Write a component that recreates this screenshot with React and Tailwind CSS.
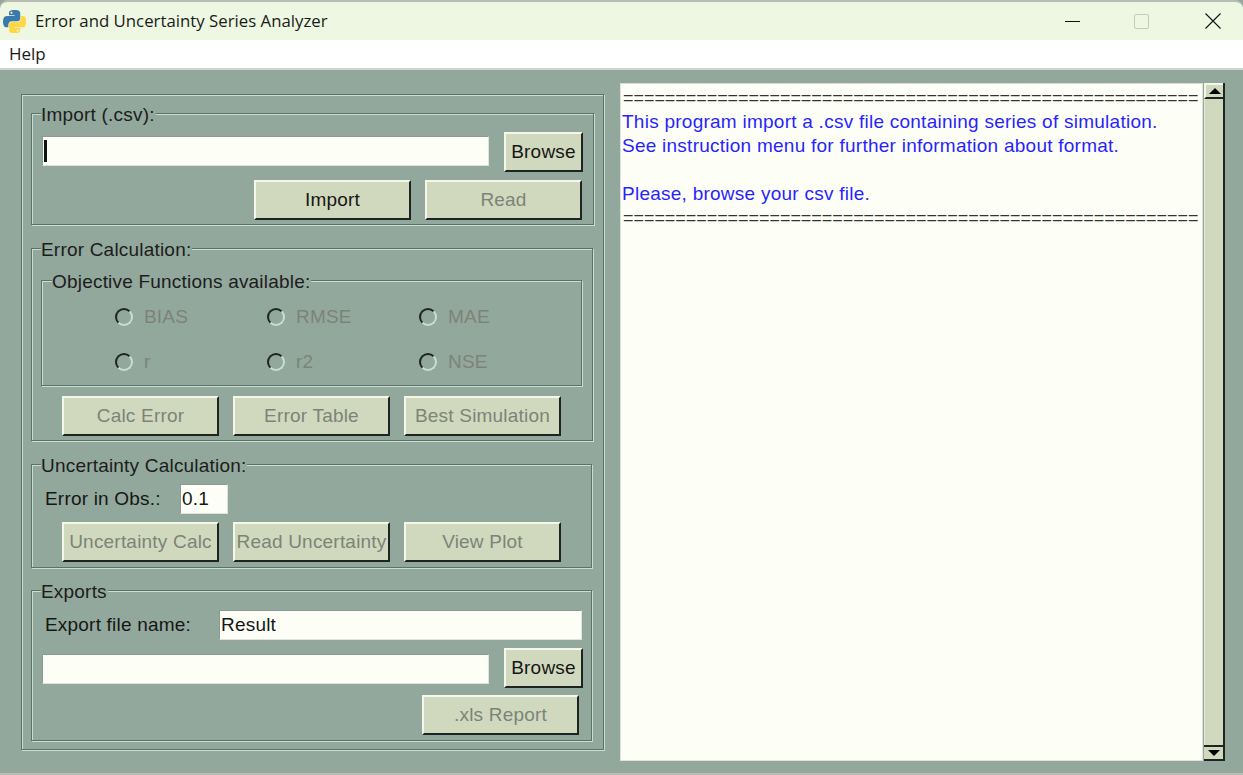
import React from "react";

const etched = "border border-[#5d7267] shadow-[inset_1px_1px_0_#c9ddd2,1px_1px_0_#c9ddd2]";
const font = "font-['Liberation_Sans',sans-serif] text-[19px] tracking-[0.2px]";

function Group({ label, className = "", labelClass = "left-[9px]", children }) {
  return (
    <div className={`relative ${etched} ${className}`}>
      <span className={`absolute top-[-10px] bg-[#92a89c] pr-[1px] leading-[22px] text-[#1c1c1c] ${labelClass}`}>{label}</span>
      {children}
    </div>
  );
}

function Btn({ children, disabled, className = "w-[157px] h-[40px]" }) {
  return (
    <div
      className={`flex shrink-0 items-center justify-center whitespace-nowrap bg-[#d0d9bd] border-t-2 border-l-2 border-t-[#f4f7ea] border-l-[#f4f7ea] border-r-2 border-b-2 border-r-[#1e241f] border-b-[#1e241f] ${disabled ? "text-[#7d8379]" : "text-[#161616]"} ${className}`}
    >
      {children}
    </div>
  );
}

function Field({ className = "", children }) {
  return (
    <div className={`flex h-[30px] items-center bg-[#fdfff6] border border-[#dfe3da] border-t-[#8d9a92] border-l-[#8d9a92] pl-[1px] text-[#161616] ${className}`}>
      {children}
    </div>
  );
}

function Radio({ label }) {
  return (
    <div className="flex items-center gap-[11px] text-[#7d8379]">
      <span className="h-[18px] w-[18px] rounded-full border-2 border-t-[#20251f] border-l-[#20251f] border-r-[#c9ddd2] border-b-[#c9ddd2]" />
      <span className="leading-[22px]">{label}</span>
    </div>
  );
}

function Python() {
  return (
    <svg viewBox="0 0 110 110" className="ml-[3px] h-[23px] w-[23px]">
      <path fill="#3b79ab" d="M54.92,0.001c-4.584,0.021-8.961,0.412-12.812,1.094C30.762,3.099,28.7,7.295,28.7,15.032v10.219h26.812v3.406H28.7H18.638c-7.792,0-14.616,4.684-16.75,13.594c-2.462,10.213-2.571,16.586,0,27.25c1.906,7.938,6.458,13.594,14.25,13.594h9.219v-12.25c0-8.85,7.657-16.656,16.75-16.656h26.781c7.455,0,13.406-6.138,13.406-13.625v-25.531c0-7.266-6.13-12.725-13.406-13.937C64.282,0.328,59.502-0.02,54.92,0.001zM40.42,8.219c2.77,0,5.031,2.299,5.031,5.125c0,2.816-2.262,5.094-5.031,5.094c-2.779,0-5.031-2.277-5.031-5.094C35.389,10.518,37.641,8.219,40.42,8.219z" />
      <path fill="#ffd745" d="M85.638,28.657v11.906c0,9.231-7.826,17-16.75,17H42.107c-7.336,0-13.406,6.278-13.406,13.625v25.531c0,7.266,6.319,11.54,13.406,13.625c8.487,2.496,16.626,2.947,26.781,0c6.75-1.954,13.406-5.888,13.406-13.625V86.501H55.513v-3.406h26.781h13.406c7.792,0,10.696-5.435,13.406-13.594c2.799-8.399,2.68-16.476,0-27.25c-1.926-7.757-5.604-13.594-13.406-13.594H85.638zM70.575,93.313c2.779,0,5.031,2.277,5.031,5.094c0,2.826-2.252,5.125-5.031,5.125c-2.77,0-5.031-2.299-5.031-5.125C65.544,95.59,67.806,93.313,70.575,93.313z" />
    </svg>
  );
}

const eq = "=".repeat(55);

export default function App() {
  return (
    <div className={`flex h-[775px] w-[1243px] flex-col overflow-hidden border-b-2 border-b-[#b9bcb5] bg-[#92a89c] ${font}`}>
      <div className="flex h-[40px] shrink-0 items-center rounded-t-[8px] border-t-2 border-t-[#b9bcb5] bg-[#edf7e1] tracking-normal">
        <Python />
        <span className="ml-[9px] font-['Open_Sans',sans-serif] text-[16.8px] text-[#1a1a1a]">Error and Uncertainty Series Analyzer</span>
        <div className="ml-auto flex items-center">
          <svg width="16" height="16" viewBox="0 0 16 16" className="mr-[53px]"><path d="M0 8.500h15" stroke="#111" strokeWidth="1" /></svg>
          <span className="mr-[56px] h-[15px] w-[15px] rounded-[2px] border border-[#c3ccba]" />
          <svg width="16" height="16" viewBox="0 0 16 16" className="mr-[22px]"><path d="M.5.5l15 15M15.500.5l-15 15" stroke="#111" strokeWidth="1.1" /></svg>
        </div>
      </div>
      <div className="flex h-[30px] shrink-0 items-start border-b-2 border-b-[#d2d4d0] bg-white pl-[9px] pt-[3px] font-['Open_Sans',sans-serif] text-[17px] leading-[22px] tracking-normal text-[#1a1a1a]">Help</div>

      <div className="flex flex-1 items-start">
        <div className={`ml-[21px] mt-[24px] h-[656px] w-[583px] shrink-0 px-[9px] pt-[18px] ${etched}`}>
          <Group label="Import (.csv):" className="h-[112px] w-[563px]">
            <div className="ml-[10px] mt-[18px] flex items-start">
              <Field className="mt-[4px] w-[447px]"><span className="h-[22px] w-[3px] bg-[#111]" /></Field>
              <Btn className="ml-[15px] h-[40px] w-[79px]">Browse</Btn>
            </div>
            <div className="ml-[222px] mt-[8px] flex gap-[14px]">
              <Btn>Import</Btn>
              <Btn disabled>Read</Btn>
            </div>
          </Group>

          <Group label="Error Calculation:" className="mt-[23px] h-[193px] w-[562px]">
            <Group label="Objective Functions available:" labelClass="left-[10px]" className="ml-[9px] mt-[31px] h-[106px] w-[541px]">
              <div className="ml-[73px] mt-[25px] grid grid-cols-[152px_152px_100px] gap-y-[23px]">
                {["BIAS", "RMSE", "MAE", "r", "r2", "NSE"].map((l) => <Radio key={l} label={l} />)}
              </div>
            </Group>
            <div className="ml-[30px] mt-[10px] flex gap-[14px]">
              <Btn disabled>Calc Error</Btn>
              <Btn disabled>Error Table</Btn>
              <Btn disabled>Best Simulation</Btn>
            </div>
          </Group>

          <Group label="Uncertainty Calculation:" className="mt-[23px] h-[104px] w-[561px]">
            <div className="ml-[13px] mt-[19px] flex items-center">
              <span className="w-[135px] text-[#161616]">Error in Obs.:</span>
              <Field className="w-[48px]">0.1</Field>
            </div>
            <div className="ml-[30px] mt-[8px] flex gap-[14px]">
              <Btn disabled>Uncertainty Calc</Btn>
              <Btn disabled>Read Uncertainty</Btn>
              <Btn disabled>View Plot</Btn>
            </div>
          </Group>

          <Group label="Exports" className="mt-[22px] h-[151px] w-[561px]">
            <div className="ml-[13px] mt-[19px] flex items-center">
              <span className="w-[174px] text-[#161616]">Export file name:</span>
              <Field className="w-[363px]">Result</Field>
            </div>
            <div className="ml-[10px] mt-[8px] flex items-start">
              <Field className="mt-[6px] w-[447px]" />
              <Btn className="ml-[15px] h-[40px] w-[79px]">Browse</Btn>
            </div>
            <div className="ml-[390px] mt-[7px]"><Btn disabled>.xls Report</Btn></div>
          </Group>
        </div>

        <div className="ml-[16px] mt-[13px] flex h-[678px]">
          <div className="h-full w-[583px] overflow-hidden border border-[#dfe3da] border-t-[#d8dcd3] bg-[#fdfff6] pl-[1px] pt-[2px] leading-[24px] tracking-[0.25px] text-[#2a1fff]">
            <div className="whitespace-nowrap pl-[1px] text-[18px] tracking-[-0.05px] text-[#333]">{eq}</div>
            <div>This program import a .csv file containing series of simulation.</div>
            <div>See instruction menu for further information about format.</div>
            <div className="h-[24px]" />
            <div>Please, browse your csv file.</div>
            <div className="whitespace-nowrap pl-[1px] text-[18px] tracking-[-0.05px] text-[#333]">{eq}</div>
          </div>
          <div className="ml-[1px] flex h-full w-[21px] flex-col border-r-2 border-r-[#1e241f] bg-[#d0d9bd]">
            <div className="flex h-[16px] items-center justify-center border-t-2 border-l-2 border-b-2 border-t-[#f4f7ea] border-l-[#f4f7ea] border-b-[#1e241f]">
              <span className="h-0 w-0 border-x-[6px] border-b-[6px] border-x-transparent border-b-black" />
            </div>
            <div className="flex-1 border-l border-l-[#e6ebd8]" />
            <div className="flex h-[16px] items-center justify-center border-t-2 border-b-2 border-t-[#1e241f] border-b-[#1e241f]">
              <span className="h-0 w-0 border-x-[6px] border-t-[6px] border-x-transparent border-t-black" />
            </div>
          </div>
        </div>
      </div>
    </div>
  );
}
